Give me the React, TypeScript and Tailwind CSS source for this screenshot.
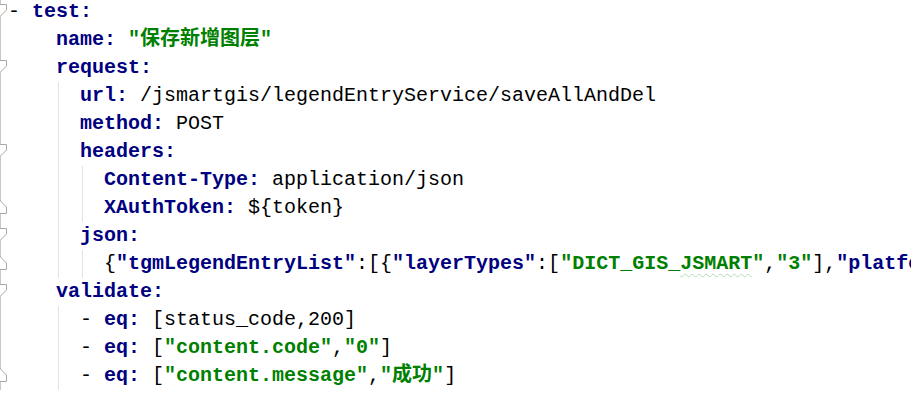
import React from "react";

type Tok = { t: "k" | "s" | "p" | "j" | "w"; v: string };
type Line = { indent: number; guides: number[]; fold?: "start" | "end"; toks: Tok[] };

const k = (v: string): Tok => ({ t: "k", v });
const s = (v: string): Tok => ({ t: "s", v });
const p = (v: string): Tok => ({ t: "p", v });
const j = (v: string): Tok => ({ t: "j", v });
const w = (v: string): Tok => ({ t: "w", v });

const lines: Line[] = [
  { indent: 0, guides: [], fold: "start", toks: [p("- "), k("test:")] },
  { indent: 4, guides: [], toks: [k("name:"), p(" "), s('"保存新增图层"')] },
  { indent: 4, guides: [], fold: "start", toks: [k("request:")] },
  { indent: 6, guides: [4], toks: [k("url:"), p(" /jsmartgis/legendEntryService/saveAllAndDel")] },
  { indent: 6, guides: [4], toks: [k("method:"), p(" POST")] },
  { indent: 6, guides: [4], fold: "start", toks: [k("headers:")] },
  { indent: 8, guides: [4, 6], toks: [k("Content-Type:"), p(" application/json")] },
  { indent: 8, guides: [4, 6], fold: "end", toks: [k("XAuthToken:"), p(" ${token}")] },
  { indent: 6, guides: [4], fold: "start", toks: [k("json:")] },
  {
    indent: 8,
    guides: [4, 6],
    fold: "end",
    toks: [
      p("{"),
      j('"tgmLegendEntryList"'),
      p(":[{"),
      j('"layerTypes"'),
      p(":["),
      s('"DICT_GIS_'),
      w("JSMART"),
      s('"'),
      p(","),
      s('"3"'),
      p("],"),
      j('"platformType"'),
      p(':"1"}]}'),
    ],
  },
  { indent: 4, guides: [], fold: "start", toks: [k("validate:")] },
  { indent: 6, guides: [4], toks: [p("- "), k("eq:"), p(" [status_code,200]")] },
  { indent: 6, guides: [4], toks: [p("- "), k("eq:"), p(" ["), s('"content.code"'), p(","), s('"0"'), p("]")] },
  {
    indent: 6,
    guides: [4],
    fold: "end",
    toks: [p("- "), k("eq:"), p(" ["), s('"content.message"'), p(","), s('"成功"'), p("]")],
  },
];

function FoldMarker({ kind }: { kind: "start" | "end" }) {
  return (
    <svg width="8" height="28" viewBox="0 0 8 28" className="block">
      {kind === "start" ? (
        <polygon points="-6,6.5 6.5,6.5 6.5,12 0,18.5 -6,12" fill="#ffffff" stroke="#a8a8a8" strokeWidth="1" />
      ) : (
        <polygon points="-6,19.5 6.5,19.5 6.5,13 0,6.5 -6,13" fill="#ffffff" stroke="#a8a8a8" strokeWidth="1" />
      )}
    </svg>
  );
}

function TokSpan({ tok }: { tok: Tok }) {
  if (tok.t === "k" || tok.t === "j") return <span className="font-bold text-[#000080]">{tok.v}</span>;
  if (tok.t === "s") return <span className="font-bold text-[#008000]">{tok.v}</span>;
  if (tok.t === "w")
    return (
      <span className="font-bold text-[#008000] underline decoration-wavy decoration-[#b5dab5] decoration-1 underline-offset-[4px]">
        {tok.v}
      </span>
    );
  return <span className="font-normal text-black">{tok.v}</span>;
}

function Indent({ n, guides }: { n: number; guides: number[] }) {
  const cells = [];
  for (let c = 0; c < n; c += 2) {
    if (guides.includes(c)) {
      cells.push(<span key={c} className="inline-block h-[28px] w-[22px] ml-[2px] border-l border-[#e2e2e2] align-top shrink-0" />);
    } else {
      cells.push(<span key={c} className="inline-block h-[28px] w-[24px] align-top shrink-0" />);
    }
  }
  return <>{cells}</>;
}

export default function App() {
  return (
    <div className="w-[911px] h-[403px] overflow-hidden bg-white">
      <div className="relative -mt-[2px] flex flex-col">
        {lines.map((ln, i) => (
          <div key={i} className="flex h-[28px] items-stretch whitespace-nowrap">
            <div className="w-[8px] shrink-0 border-l border-[#c8c8c8] relative">
              {ln.fold ? (
                <div className="absolute -left-[1px] top-0">
                  <FoldMarker kind={ln.fold} />
                </div>
              ) : null}
            </div>
            <div
              className="flex items-start text-[20px] leading-[28px]"
              style={{ fontFamily: '"Liberation Mono", "Noto Sans CJK SC", monospace' }}
            >
              <Indent n={ln.indent} guides={ln.guides} />
              <span className="whitespace-pre">
                {ln.toks.map((t, ti) => (
                  <TokSpan key={ti} tok={t} />
                ))}
              </span>
            </div>
          </div>
        ))}
      </div>
    </div>
  );
}
